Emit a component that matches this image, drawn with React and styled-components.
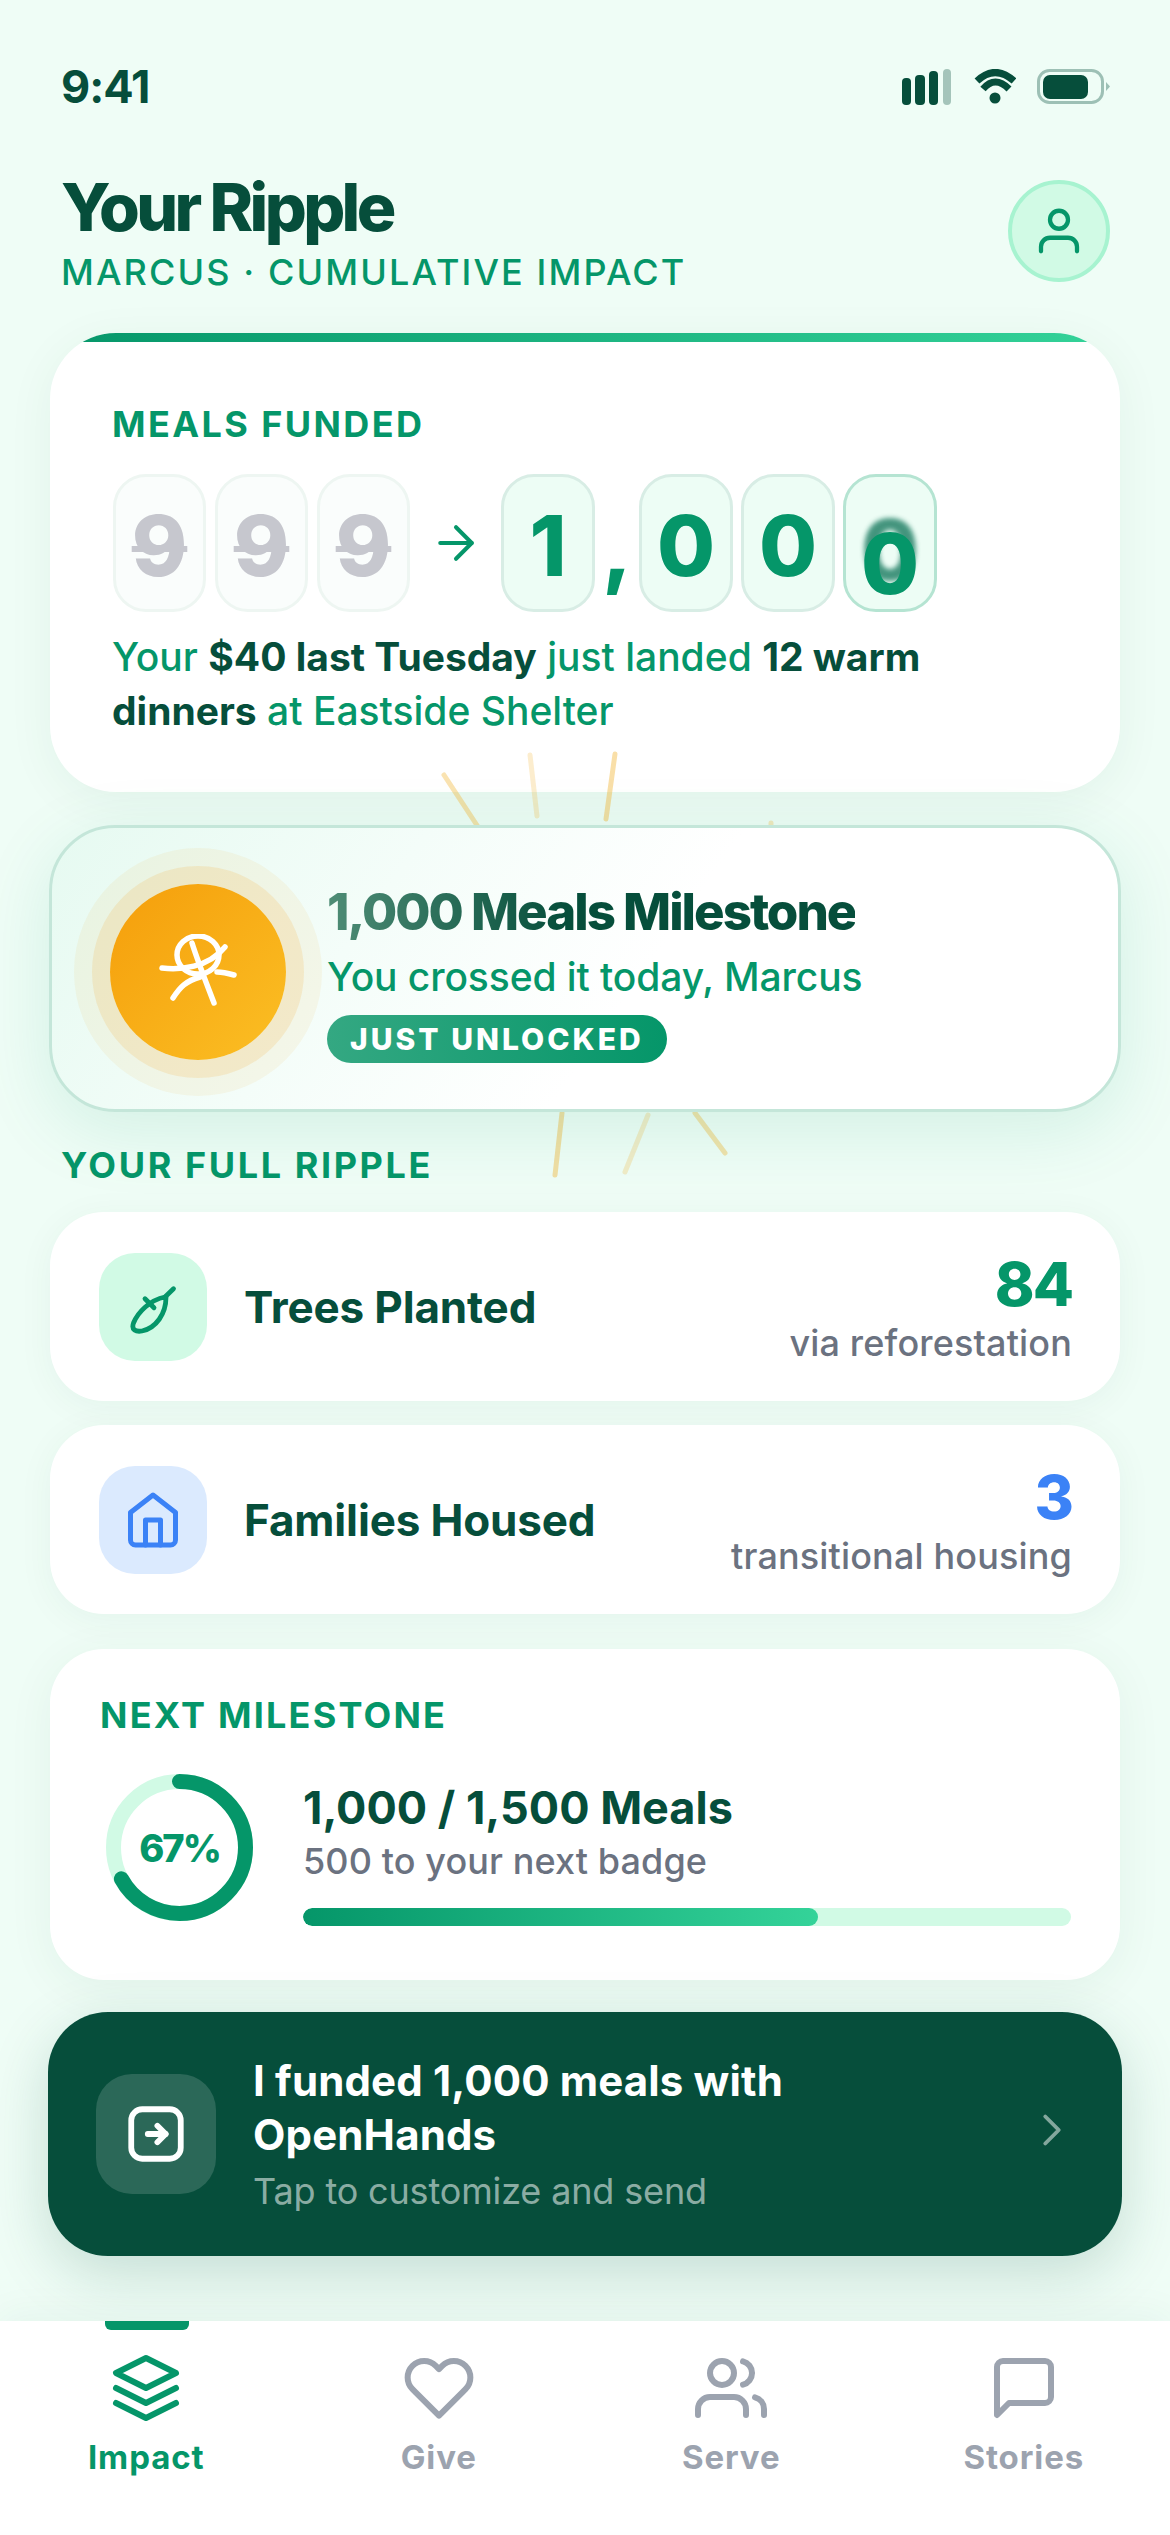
import React from "react";
import styled, { createGlobalStyle } from "styled-components";

const Global = createGlobalStyle`
  html, body { margin: 0; padding: 0; background: #effdf6; }
  * { box-sizing: border-box; }
  body { font-family: Inter, "Noto Sans", sans-serif; -webkit-font-smoothing: antialiased; }
`;

const Page = styled.div`
  width: 1170px; height: 2535px; display: flex; flex-direction: column; overflow: hidden;
  background: #effdf6; color: #064e3b;
`;
const StatusBar = styled.div`
  margin-top: 60px; height: 54px; padding: 0 59px 0 61px; display: flex; align-items: center; justify-content: space-between;
`;
const Time = styled.span` font-size: 45px; font-weight: 700; letter-spacing: -1px; line-height: 54px; `;
const StatusIcons = styled.div` display: flex; align-items: center; gap: 21px; `;
const Header = styled.header` padding: 60px 60px 0 61px; display: flex; justify-content: space-between; align-items: flex-start; `;
const Title = styled.h1` margin: 0; font-size: 66px; font-weight: 800; line-height: 66px; letter-spacing: -3.6px; `;
const Subtitle = styled.div` margin-top: 13px; font-size: 36px; line-height: 39px; font-weight: 500; letter-spacing: 2.1px; color: #059669; `;
const Avatar = styled.div`
  margin-top: 6px; width: 102px; height: 102px; border-radius: 50%; background: #d1fae5; border: 4px solid #a7f3d0;
  display: flex; align-items: center; justify-content: center; color: #059669;
`;
const Main = styled.main` flex: 1; padding: 41px 50px 0; display: flex; flex-direction: column; `;
const Card = styled.section`
  background: #fff; border-radius: ${p => p.$r || 66}px; box-shadow: 0 9px 48px rgba(6, 78, 59, 0.06);
  overflow: hidden;
`;
const TopBar = styled.div` height: 9px; background: linear-gradient(90deg, #059669, #34d399); `;
const HeroBody = styled.div` padding: 60px 62px 54px; `;
const Label = styled.div`
  font-size: 36px; line-height: 44px; font-weight: 700; letter-spacing: ${p => p.$track || 2.4}px; color: #059669;
`;
const SectionLabel = styled(Label)` margin: 31px 0 25px 11px; `;
const Digits = styled.div` margin: 28px 0 0 1px; display: flex; align-items: stretch; gap: 8px; height: 138px; `;
const Tile = styled.div`
  position: relative; flex: none; width: ${p => (p.$old ? 93 : 94)}px; margin-right: ${p => (p.$old ? 1 : 0)}px; height: 138px; border-radius: 33px;
  padding-top: 6px; display: flex; align-items: center; justify-content: center;
  font-size: 84px; font-weight: 800; line-height: 1;
  background: ${p => (p.$old ? "#fafdfc" : "#edfdf5")};
  border: 3px solid ${p => (p.$old ? "#eef6f2" : p.$last ? "#b5e4d2" : "#d8ede5")};
  color: ${p => (p.$old ? "#c6c7ce" : "#059669")};
  text-decoration: ${p => (p.$old ? "line-through" : "none")};
  text-decoration-thickness: 6px;
`;
const Arrow = styled.div` width: 74px; display: flex; align-items: center; justify-content: center; color: #059669; `;
const Comma = styled.div` width: 28px; display: flex; align-items: center; justify-content: center; font-size: 84px; font-weight: 800; color: #059669; line-height: 1; padding-top: 10px; `;
const Roller = styled.span` position: relative; top: 18px; z-index: 1; `;
const Ghost = styled.span`
  position: absolute; left: 0; right: 0; top: 31px; text-align: center; color: #0b7256; opacity: 0.75; filter: blur(2.5px);
`;
const Sentence = styled.p` margin: 18px 0 0; font-size: 39px; line-height: 54px; font-weight: 500; color: #059669; `;
const Strong = styled.b` font-weight: 650; color: #064e3b; `;

const MilestoneWrap = styled.div` position: relative; margin-top: 33px; `;
const Rays = styled.svg` position: absolute; left: 0; top: -99px; width: 1070px; height: 500px; pointer-events: none; `;
const Milestone = styled.section`
  position: relative; height: 287px; margin: 0 -1px; padding: 0 58px; border-radius: 66px; border: 3px solid #c4e6d9;
  background: linear-gradient(125deg, #e6faf1 0%, #f4fdf9 30%, #fff 55%);
  box-shadow: 0 18px 72px rgba(5, 150, 105, 0.12);
  display: flex; align-items: center; gap: 41px;
`;
const Medal = styled.div`
  width: 176px; height: 176px; border-radius: 50%; flex: none; background: linear-gradient(135deg, #f59e0b, #fbbf24);
  box-shadow: 0 0 0 18px rgba(245, 158, 11, 0.14), 0 0 0 36px rgba(245, 158, 11, 0.07);
  display: flex; align-items: center; justify-content: center; margin-top: 7px;
`;
const MilestoneText = styled.div` display: flex; flex-direction: column; align-items: flex-start; margin-top: 2px; `;
const MilestoneTitle = styled.div`
  font-size: 51px; line-height: 72px; font-weight: 800; letter-spacing: -2px;
  background: linear-gradient(90deg, #4f8d76 0%, #064e3b 45%); -webkit-background-clip: text; background-clip: text; color: transparent;
`;
const MilestoneSub = styled.div` margin-top: 2px; font-size: 39px; line-height: 54px; font-weight: 500; color: #059669; letter-spacing: -0.1px; `;
const Badge = styled.div`
  margin-top: 11px; height: 48px; padding: 0 23px; border-radius: 24px; display: flex; align-items: center;
  background: linear-gradient(90deg, #34a882, #059669); color: #fff; font-size: 30px; font-weight: 800; letter-spacing: 3px;
`;

const StatList = styled.div` display: flex; flex-direction: column; gap: 24px; `;
const StatRow = styled.section`
  height: 189px; padding: 0 48px 0 49px; background: #fff; border-radius: 54px; box-shadow: 0 6px 36px rgba(6, 78, 59, 0.05);
  display: flex; align-items: center;
`;
const StatIcon = styled.div`
  width: 108px; height: 108px; border-radius: 36px; flex: none; display: flex; align-items: center; justify-content: center;
  background: ${p => p.$bg}; color: ${p => p.$fg};
`;
const StatName = styled.div` margin-left: 37px; font-size: 44px; font-weight: 700; color: #064e3b; flex: 1; letter-spacing: -0.15px; `;
const StatSide = styled.div` text-align: right; padding-top: 5px; `;
const StatValue = styled.div` font-size: 60px; line-height: 60px; font-weight: 800; color: ${p => p.$c}; letter-spacing: -2px; `;
const StatNote = styled.div` margin-top: 8px; font-size: 36px; line-height: 42px; font-weight: 500; color: #6b7280; letter-spacing: 0.15px; `;

const NextCard = styled(Card)` margin-top: 35px; padding: 44px 49px 54px 50px; border-radius: 54px; `;
const NextRow = styled.div` margin-top: 37px; display: flex; gap: 50px; align-items: flex-start; `;
const Ring = styled.div` position: relative; margin-left: 6px; width: 147px; height: 147px; flex: none; `;
const RingText = styled.div`
  position: absolute; inset: 0; display: flex; align-items: center; justify-content: center;
  font-size: 38px; font-weight: 800; color: #059669; letter-spacing: -2px;
`;
const NextInfo = styled.div` flex: 1; margin-top: 7px; `;
const NextTitle = styled.div` font-size: 45px; line-height: 54px; font-weight: 700; color: #064e3b; `;
const NextSub = styled.div` margin-top: 2px; font-size: 36px; line-height: 48px; font-weight: 500; color: #6b7280; letter-spacing: 0.1px; `;
const Track = styled.div` margin-top: 23px; height: 18px; border-radius: 9px; background: #d1fae5; overflow: hidden; `;
const Fill = styled.div` height: 100%; border-radius: 9px; background: linear-gradient(90deg, #059669, #34d399); `;

const Share = styled.section`
  margin: 32px -2px 0; height: 244px; padding: 0 43px 0 48px; background: #064e3b; border-radius: 60px;
  box-shadow: 0 18px 60px rgba(6, 78, 59, 0.18); display: flex; align-items: center; gap: 37px; color: #fff;
`;
const ShareIcon = styled.div`
  width: 120px; height: 120px; border-radius: 36px; flex: none; background: rgba(255, 255, 255, 0.15);
  display: flex; align-items: center; justify-content: center;
`;
const ShareText = styled.div` flex: 1; `;
const ShareTitle = styled.div` font-size: 42px; line-height: 54px; font-weight: 700; letter-spacing: 0.15px; `;
const ShareSub = styled.div` margin-top: 5px; font-size: 36px; line-height: 48px; font-weight: 400; color: rgba(255, 255, 255, 0.55); letter-spacing: -0.15px; `;
const Chevron = styled.div` display: flex; color: rgba(255, 255, 255, 0.5); margin-top: -8px; `;

const TabBar = styled.nav`
  height: 214px; background: #fff; display: grid; grid-template-columns: repeat(4, 1fr);
  box-shadow: 0 -6px 36px rgba(6, 78, 59, 0.05); position: relative;
`;
const Tab = styled.div`
  position: relative; padding-top: 31px; display: flex; flex-direction: column; align-items: center;
  color: ${p => (p.$active ? "#059669" : "#9ca3af")};
`;
const Indicator = styled.div`
  position: absolute; top: 0; left: 50%; margin-left: -41px; width: 84px; height: 9px; border-radius: 0 0 6px 6px; background: #059669;
`;
const TabLabel = styled.div` margin-top: 13px; font-size: 33px; line-height: 40px; font-weight: 700; letter-spacing: 0.9px; `;

const Stroke = ({ size, width = 2, children }) => (
  <svg width={size} height={size} viewBox="0 0 24 24" fill="none" stroke="currentColor" strokeWidth={width} strokeLinecap="round" strokeLinejoin="round">
    {children}
  </svg>
);

const SignalIcon = () => (
  <svg width="51" height="36" viewBox="0 0 51 36" fill="#064e3b">
    <rect x="0" y="9" width="9" height="27" rx="4" />
    <rect x="13" y="6" width="10" height="30" rx="4" />
    <rect x="27" y="2" width="9" height="34" rx="4" />
    <rect x="41" y="0" width="8" height="36" rx="4" opacity="0.32" />
  </svg>
);
const WifiIcon = () => (
  <svg width="42" height="36" viewBox="0 0 42 36" fill="none" stroke="#064e3b" strokeWidth="7">
    <path d="M3 12Q21 -5 40 12" />
    <path d="M9 20Q21 6 35 20" />
    <circle cx="21" cy="29" r="5.5" fill="#064e3b" stroke="none" />
  </svg>
);
const BatteryIcon = () => (
  <svg width="74" height="36" viewBox="0 0 74 36">
    <rect x="1.5" y="1.5" width="64" height="32" rx="11" fill="none" stroke="#064e3b" strokeWidth="3" opacity="0.35" />
    <rect x="6" y="6" width="45" height="24" rx="7" fill="#064e3b" />
    <path d="M69 13L73 17.5L69 22Z" fill="#064e3b" opacity="0.35" />
  </svg>
);

const UserIcon = () => (
  <Stroke size={54} width={1.9}>
    <path d="M20 21v-2a4 4 0 0 0-4-4H8a4 4 0 0 0-4 4v2" />
    <circle cx="12" cy="7" r="4" />
  </Stroke>
);

const RayLines = () => {
  const rays = [
    [394, 49, 434, 110, 0.4],
    [480, 29, 487, 90, 0.25],
    [565, 28, 556, 93, 0.45],
    [721, 97, 721, 102, 0.3],
    [512, 387, 505, 449, 0.45],
    [598, 389, 575, 446, 0.25],
    [645, 387, 675, 427, 0.4],
  ];
  return (
    <Rays viewBox="0 0 1070 500" fill="none" stroke="#f2b93d" strokeWidth="5" strokeLinecap="round">
      {rays.map(([a, b, c, d, o], i) => (
        <line key={i} x1={a} y1={b} x2={c} y2={d} opacity={o} />
      ))}
    </Rays>
  );
};

const MedalGlyph = () => (
  <svg width="84" height="76" viewBox="0 0 84 76" fill="none" stroke="#fff" strokeWidth="5.5" strokeLinecap="round">
    <ellipse cx="42" cy="21" rx="21" ry="19" />
    <path d="M6 34C24 36 52 34 69 13" />
    <path d="M36 9C42 28 50 48 58 69" />
    <path d="M17 64C24 53 30 47 44 43" />
    <path d="M61 38C66 38 71 39 78 41" />
  </svg>
);

const LeafIcon = () => (
  <svg width="54" height="54" viewBox="0 0 54 54" fill="none" stroke="currentColor" strokeWidth="4.8" strokeLinecap="round" strokeLinejoin="round">
    <path d="M39 17C24 20 12 32 7.5 43C5 50 10 52 16 51C30 48 40 34 40 17" />
    <path d="M47.5 8.7L39 17" />
    <path d="M19 18.7L28 27.7" />
  </svg>
);
const HomeIcon = () => (
  <Stroke size={60}>
    <path d="M3 9l9-7 9 7v11a2 2 0 0 1-2 2H5a2 2 0 0 1-2-2z" />
    <path d="M9 22V12h6v10" />
  </Stroke>
);

const ProgressRing = () => {
  const r = 66;
  const c = 2 * Math.PI * r;
  return (
    <Ring>
      <svg width="147" height="147" viewBox="0 0 147 147" fill="none" strokeWidth="15">
        <circle cx="73.5" cy="73.5" r={r} stroke="#d1fae5" />
        <circle cx="73.5" cy="73.5" r={r} stroke="#059669" strokeLinecap="round"
          strokeDasharray={`${c * 0.67} ${c}`} transform="rotate(-90 73.5 73.5)" />
      </svg>
      <RingText>67%</RingText>
    </Ring>
  );
};

const tabs = [
  { name: "Impact", active: true, icon: <><path d="M12 2 2 7l10 5 10-5-10-5z" /><path d="M2 17l10 5 10-5" /><path d="M2 12l10 5 10-5" /></> },
  { name: "Give", icon: <path d="M20.84 4.61a5.5 5.5 0 0 0-7.78 0L12 5.67l-1.06-1.06a5.5 5.5 0 0 0-7.78 7.78l1.06 1.06L12 21.23l7.78-7.78 1.06-1.06a5.5 5.5 0 0 0 0-7.78z" /> },
  { name: "Serve", icon: <><path d="M17 21v-2a4 4 0 0 0-4-4H5a4 4 0 0 0-4 4v2" /><circle cx="9" cy="7" r="4" /><path d="M23 21v-2a4 4 0 0 0-3-3.87" /><path d="M16 3.13a4 4 0 0 1 0 7.75" /></> },
  { name: "Stories", icon: <path d="M21 15a2 2 0 0 1-2 2H7l-4 4V5a2 2 0 0 1 2-2h14a2 2 0 0 1 2 2z" /> },
];

export default function App() {
  return (
    <Page>
      <Global />
      <StatusBar>
        <Time>9:41</Time>
        <StatusIcons>
          <SignalIcon />
          <WifiIcon />
          <BatteryIcon />
        </StatusIcons>
      </StatusBar>
      <Header>
        <div>
          <Title>Your Ripple</Title>
          <Subtitle>MARCUS · CUMULATIVE IMPACT</Subtitle>
        </div>
        <Avatar><UserIcon /></Avatar>
      </Header>
      <Main>
        <Card>
          <TopBar />
          <HeroBody>
            <Label>MEALS FUNDED</Label>
            <Digits>
              <Tile $old>9</Tile>
              <Tile $old>9</Tile>
              <Tile $old>9</Tile>
              <Arrow>
                <Stroke size={54} width={1.8}><path d="M5 12h14" /><path d="M12 5l7 7-7 7" /></Stroke>
              </Arrow>
              <Tile>1</Tile>
              <Comma>,</Comma>
              <Tile>0</Tile>
              <Tile>0</Tile>
              <Tile $last>
                <Ghost aria-hidden="true">0</Ghost>
                <Roller>0</Roller>
              </Tile>
            </Digits>
            <Sentence>
              Your <Strong>$40 last Tuesday</Strong> just landed <Strong>12 warm dinners</Strong> at Eastside Shelter
            </Sentence>
          </HeroBody>
        </Card>
        <MilestoneWrap>
          <RayLines />
          <Milestone>
            <Medal><MedalGlyph /></Medal>
            <MilestoneText>
              <MilestoneTitle>1,000 Meals Milestone</MilestoneTitle>
              <MilestoneSub>You crossed it today, Marcus</MilestoneSub>
              <Badge>JUST UNLOCKED</Badge>
            </MilestoneText>
          </Milestone>
        </MilestoneWrap>
        <SectionLabel $track={2.6}>YOUR FULL RIPPLE</SectionLabel>
        <StatList>
          <StatRow>
            <StatIcon $bg="#d1fae5" $fg="#059669"><LeafIcon /></StatIcon>
            <StatName>Trees Planted</StatName>
            <StatSide>
              <StatValue $c="#059669">84</StatValue>
              <StatNote>via reforestation</StatNote>
            </StatSide>
          </StatRow>
          <StatRow>
            <StatIcon $bg="#dbeafe" $fg="#3b82f6"><HomeIcon /></StatIcon>
            <StatName>Families Housed</StatName>
            <StatSide>
              <StatValue $c="#3b82f6">3</StatValue>
              <StatNote>transitional housing</StatNote>
            </StatSide>
          </StatRow>
        </StatList>
        <NextCard>
          <Label $track={2.2}>NEXT MILESTONE</Label>
          <NextRow>
            <ProgressRing />
            <NextInfo>
              <NextTitle>1,000 / 1,500 Meals</NextTitle>
              <NextSub>500 to your next badge</NextSub>
              <Track><Fill style={{ width: "67%" }} /></Track>
            </NextInfo>
          </NextRow>
        </NextCard>
        <Share>
          <ShareIcon>
            <Stroke size={66} width={2.1}>
              <rect x="3" y="3" width="18" height="18" rx="4" />
              <path d="M12.5 9l3 3-3 3" />
              <path d="M9 12h6.5" />
            </Stroke>
          </ShareIcon>
          <ShareText>
            <ShareTitle>I funded 1,000 meals with<br />OpenHands</ShareTitle>
            <ShareSub>Tap to customize and send</ShareSub>
          </ShareText>
          <Chevron>
            <Stroke size={54} width={1.7}><path d="M9 18l6-6-6-6" /></Stroke>
          </Chevron>
        </Share>
      </Main>
      <TabBar>
        {tabs.map(t => (
          <Tab key={t.name} $active={t.active}>
            {t.active && <Indicator />}
            <Stroke size={72}>{t.icon}</Stroke>
            <TabLabel>{t.name}</TabLabel>
          </Tab>
        ))}
      </TabBar>
    </Page>
  );
}
